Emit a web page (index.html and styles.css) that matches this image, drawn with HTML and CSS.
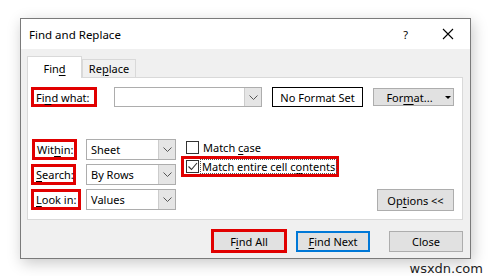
FILE: index.html
```html
<!DOCTYPE html>
<html lang="en">
<head>
    <meta charset="UTF-8">
    <meta name="viewport" content="width=device-width, initial-scale=1.0">
    <title>Find and Replace</title>
    <link rel="stylesheet" href="styles.css">
</head>
<body>
    <div class="dialog">
        <div class="titlebar">
            <span class="title">Find and Replace</span>
            <span class="help">?</span>
            <svg class="close-x" width="12" height="12" viewBox="0 0 12 12">
                <path d="M1 1 L11 11 M11 1 L1 11" stroke="#000" stroke-width="1.1" fill="none"/>
            </svg>
        </div>
        <div class="dialog-body">
            <div class="tabs">
                <div class="tab active">Fin<u>d</u></div>
                <div class="tab">Re<u>p</u>lace</div>
            </div>
            <div class="panel">
                <div class="row-find">
                    <span class="mark label-find">Fi<u>n</u>d what:</span>
                    <div class="combo combo-find">
                        <span class="combo-text"></span>
                        <span class="combo-arrow">
                            <svg width="9" height="5" viewBox="0 0 9 5"><path d="M0.5 0.5 L4.5 4.5 L8.5 0.5" stroke="#555" fill="none"/></svg>
                        </span>
                    </div>
                    <span class="no-format">No Format Set</span>
                    <span class="btn btn-format">For<u>m</u>at...<span class="caret"></span></span>
                </div>
                <div class="lower">
                    <div class="opts-grid">
                        <span class="mark label-within">Wit<u>h</u>in:</span>
                        <div class="combo">
                            <span class="combo-text">Sheet</span>
                            <span class="combo-arrow">
                                <svg width="9" height="5" viewBox="0 0 9 5"><path d="M0.5 0.5 L4.5 4.5 L8.5 0.5" stroke="#555" fill="none"/></svg>
                            </span>
                        </div>
                        <span class="mark"><u>S</u>earch:</span>
                        <div class="combo">
                            <span class="combo-text">By Rows</span>
                            <span class="combo-arrow">
                                <svg width="9" height="5" viewBox="0 0 9 5"><path d="M0.5 0.5 L4.5 4.5 L8.5 0.5" stroke="#555" fill="none"/></svg>
                            </span>
                        </div>
                        <span class="mark label-look"><u>L</u>ook in:</span>
                        <div class="combo">
                            <span class="combo-text">Values</span>
                            <span class="combo-arrow">
                                <svg width="9" height="5" viewBox="0 0 9 5"><path d="M0.5 0.5 L4.5 4.5 L8.5 0.5" stroke="#555" fill="none"/></svg>
                            </span>
                        </div>
                    </div>
                    <div class="checks">
                        <div class="check-row plain">
                            <span class="box"></span>
                            <span>Match <u>c</u>ase</span>
                        </div>
                        <div class="check-row mark-box">
                            <span class="box">
                                <svg width="11" height="11" viewBox="0 0 11 11"><path d="M1.5 5.5 L4.5 8.5 L10 2" stroke="#333" stroke-width="1.1" fill="none"/></svg>
                            </span>
                            <span class="focus">Match entire cell c<u>o</u>ntents</span>
                        </div>
                    </div>
                    <div class="options-col">
                        <span class="btn btn-options">Op<u>t</u>ions &lt;&lt;</span>
                    </div>
                </div>
            </div>
            <div class="buttons">
                <span class="btn btn-findall">F<u>i</u>nd All</span>
                <span class="btn btn-findnext"><u>F</u>ind Next</span>
                <span class="btn btn-close">Close</span>
            </div>
        </div>
    </div>
    <div class="watermark">wsxdn.com</div>
</body>
</html>
```

FILE: styles.css
```css
body {
    margin: 0;
    padding: 18px 0 0 20px;
    background-color: #ffffff;
    color: #000000;
    font-family: "Noto Sans", "Open Sans", sans-serif;
    font-size: 11px;
}
u {
    text-decoration-thickness: 1px;
    text-underline-offset: 2px;
}
.dialog {
    width: 451px;
    height: 241px;
    box-sizing: border-box;
    border: 1px solid #7a7a7a;
    background-color: #f0f0f0;
    box-shadow: 2px 4px 14px rgba(0, 0, 0, 0.22);
    display: flex;
    flex-direction: column;
}
.titlebar {
    height: 30px;
    background-color: #ffffff;
    display: flex;
    align-items: center;
    padding-left: 8px;
    font-size: 11.5px;
}
.titlebar .title {
    flex-grow: 1;
}
.titlebar .help {
    font-size: 11px;
    margin-right: 34px;
}
.titlebar .close-x {
    margin-right: 16px;
}
.dialog-body {
    flex-grow: 1;
    padding: 7px 7px 0 6px;
    display: flex;
    flex-direction: column;
}
.tabs {
    display: flex;
    align-items: flex-end;
    height: 21px;
    position: relative;
    z-index: 1;
}
.tab {
    box-sizing: border-box;
    height: 18px;
    width: 54px;
    border: 1px solid #d9d9d9;
    border-bottom: none;
    background-color: #f0f0f0;
    display: flex;
    align-items: center;
    justify-content: center;
    margin-bottom: 0;
}
.tab.active {
    width: 55px;
    height: 22px;
    background-color: #ffffff;
    margin-bottom: -1px;
    padding-top: 1px;
}
.panel {
    box-sizing: border-box;
    height: 143px;
    border: 1px solid #d9d9d9;
    background-color: #ffffff;
    padding: 9px 8px 8px 3px;
    display: flex;
    flex-direction: column;
}
.mark {
    box-sizing: border-box;
    height: 21px;
    border: 3px solid #e10000;
    display: inline-flex;
    align-items: center;
    padding: 0 2px;
    white-space: nowrap;
}
.row-find {
    display: flex;
    align-items: center;
    height: 20px;
}
.label-find {
    width: 66px;
    height: 20px;
    margin-right: 17px;
}
.combo {
    box-sizing: border-box;
    height: 21px;
    width: 90px;
    border: 1px solid #adadad;
    display: flex;
    background-color: #ffffff;
}
.combo-find {
    width: 148px;
    height: 20px;
    margin-right: 10px;
}
.combo-text {
    flex-grow: 1;
    padding-left: 4px;
    display: flex;
    align-items: center;
}
.combo-arrow {
    width: 16px;
    background-color: #e5e5e5;
    border-left: 1px solid #cccccc;
    display: flex;
    align-items: center;
    justify-content: center;
}
.no-format {
    box-sizing: border-box;
    width: 91px;
    height: 20px;
    border: 1px solid #000000;
    display: flex;
    align-items: center;
    justify-content: center;
    margin-right: 10px;
}
.btn {
    box-sizing: border-box;
    background-color: #e1e1e1;
    border: 1px solid #adadad;
    display: inline-flex;
    align-items: center;
    justify-content: center;
    white-space: nowrap;
}
.btn-format {
    width: 81px;
    height: 18px;
    padding-left: 10px;
}
.btn-format .caret {
    width: 0;
    height: 0;
    border-left: 3px solid transparent;
    border-right: 3px solid transparent;
    border-top: 3px solid #000000;
    margin-left: 12px;
}
.lower {
    display: flex;
    margin-top: 32px;
    flex-grow: 1;
}
.opts-grid {
    display: grid;
    grid-template-columns: 55px 90px;
    grid-auto-rows: 21px;
    row-gap: 4px;
    align-items: center;
    justify-items: start;
}
.label-within {
    margin-left: 1px;
    width: 45px;
}
.opts-grid .mark {
    width: 45px;
}
.opts-grid .label-look {
    width: 50px;
}
.checks {
    margin-left: 5px;
    display: flex;
    flex-direction: column;
}
.check-row {
    display: flex;
    align-items: center;
    gap: 4px;
    white-space: nowrap;
}
.check-row.plain {
    height: 14px;
    padding-left: 5px;
    margin-top: 1px;
}
.check-row.mark-box {
    box-sizing: border-box;
    height: 21px;
    border: 3px solid #e10000;
    padding: 0 0 0 2px;
    margin-top: 2px;
    gap: 2px;
}
.box {
    box-sizing: border-box;
    width: 13px;
    height: 13px;
    border: 1px solid #333333;
    background-color: #ffffff;
    display: flex;
    align-items: center;
    justify-content: center;
}
.focus {
    outline: 1px dotted #555555;
    padding: 0 1px;
    line-height: 13px;
}
.options-col {
    flex-grow: 1;
    display: flex;
    justify-content: flex-end;
    align-items: flex-end;
}
.btn-options {
    width: 77px;
    height: 22px;
}
.buttons {
    display: flex;
    align-items: center;
    justify-content: flex-end;
    margin-top: 9px;
    padding-right: 0;
}
.btn-findall {
    width: 76px;
    height: 24px;
    border: 3px solid #e10000;
    margin-right: 9px;
}
.btn-findnext {
    width: 74px;
    height: 21px;
    border: 2px solid #0078d7;
    margin-right: 19px;
}
.btn-close {
    width: 74px;
    height: 21px;
}
.watermark {
    width: 463px;
    text-align: right;
    margin-top: 2px;
    font-family: "DejaVu Sans", sans-serif;
    font-size: 13px;
    color: #222222;
}
```
